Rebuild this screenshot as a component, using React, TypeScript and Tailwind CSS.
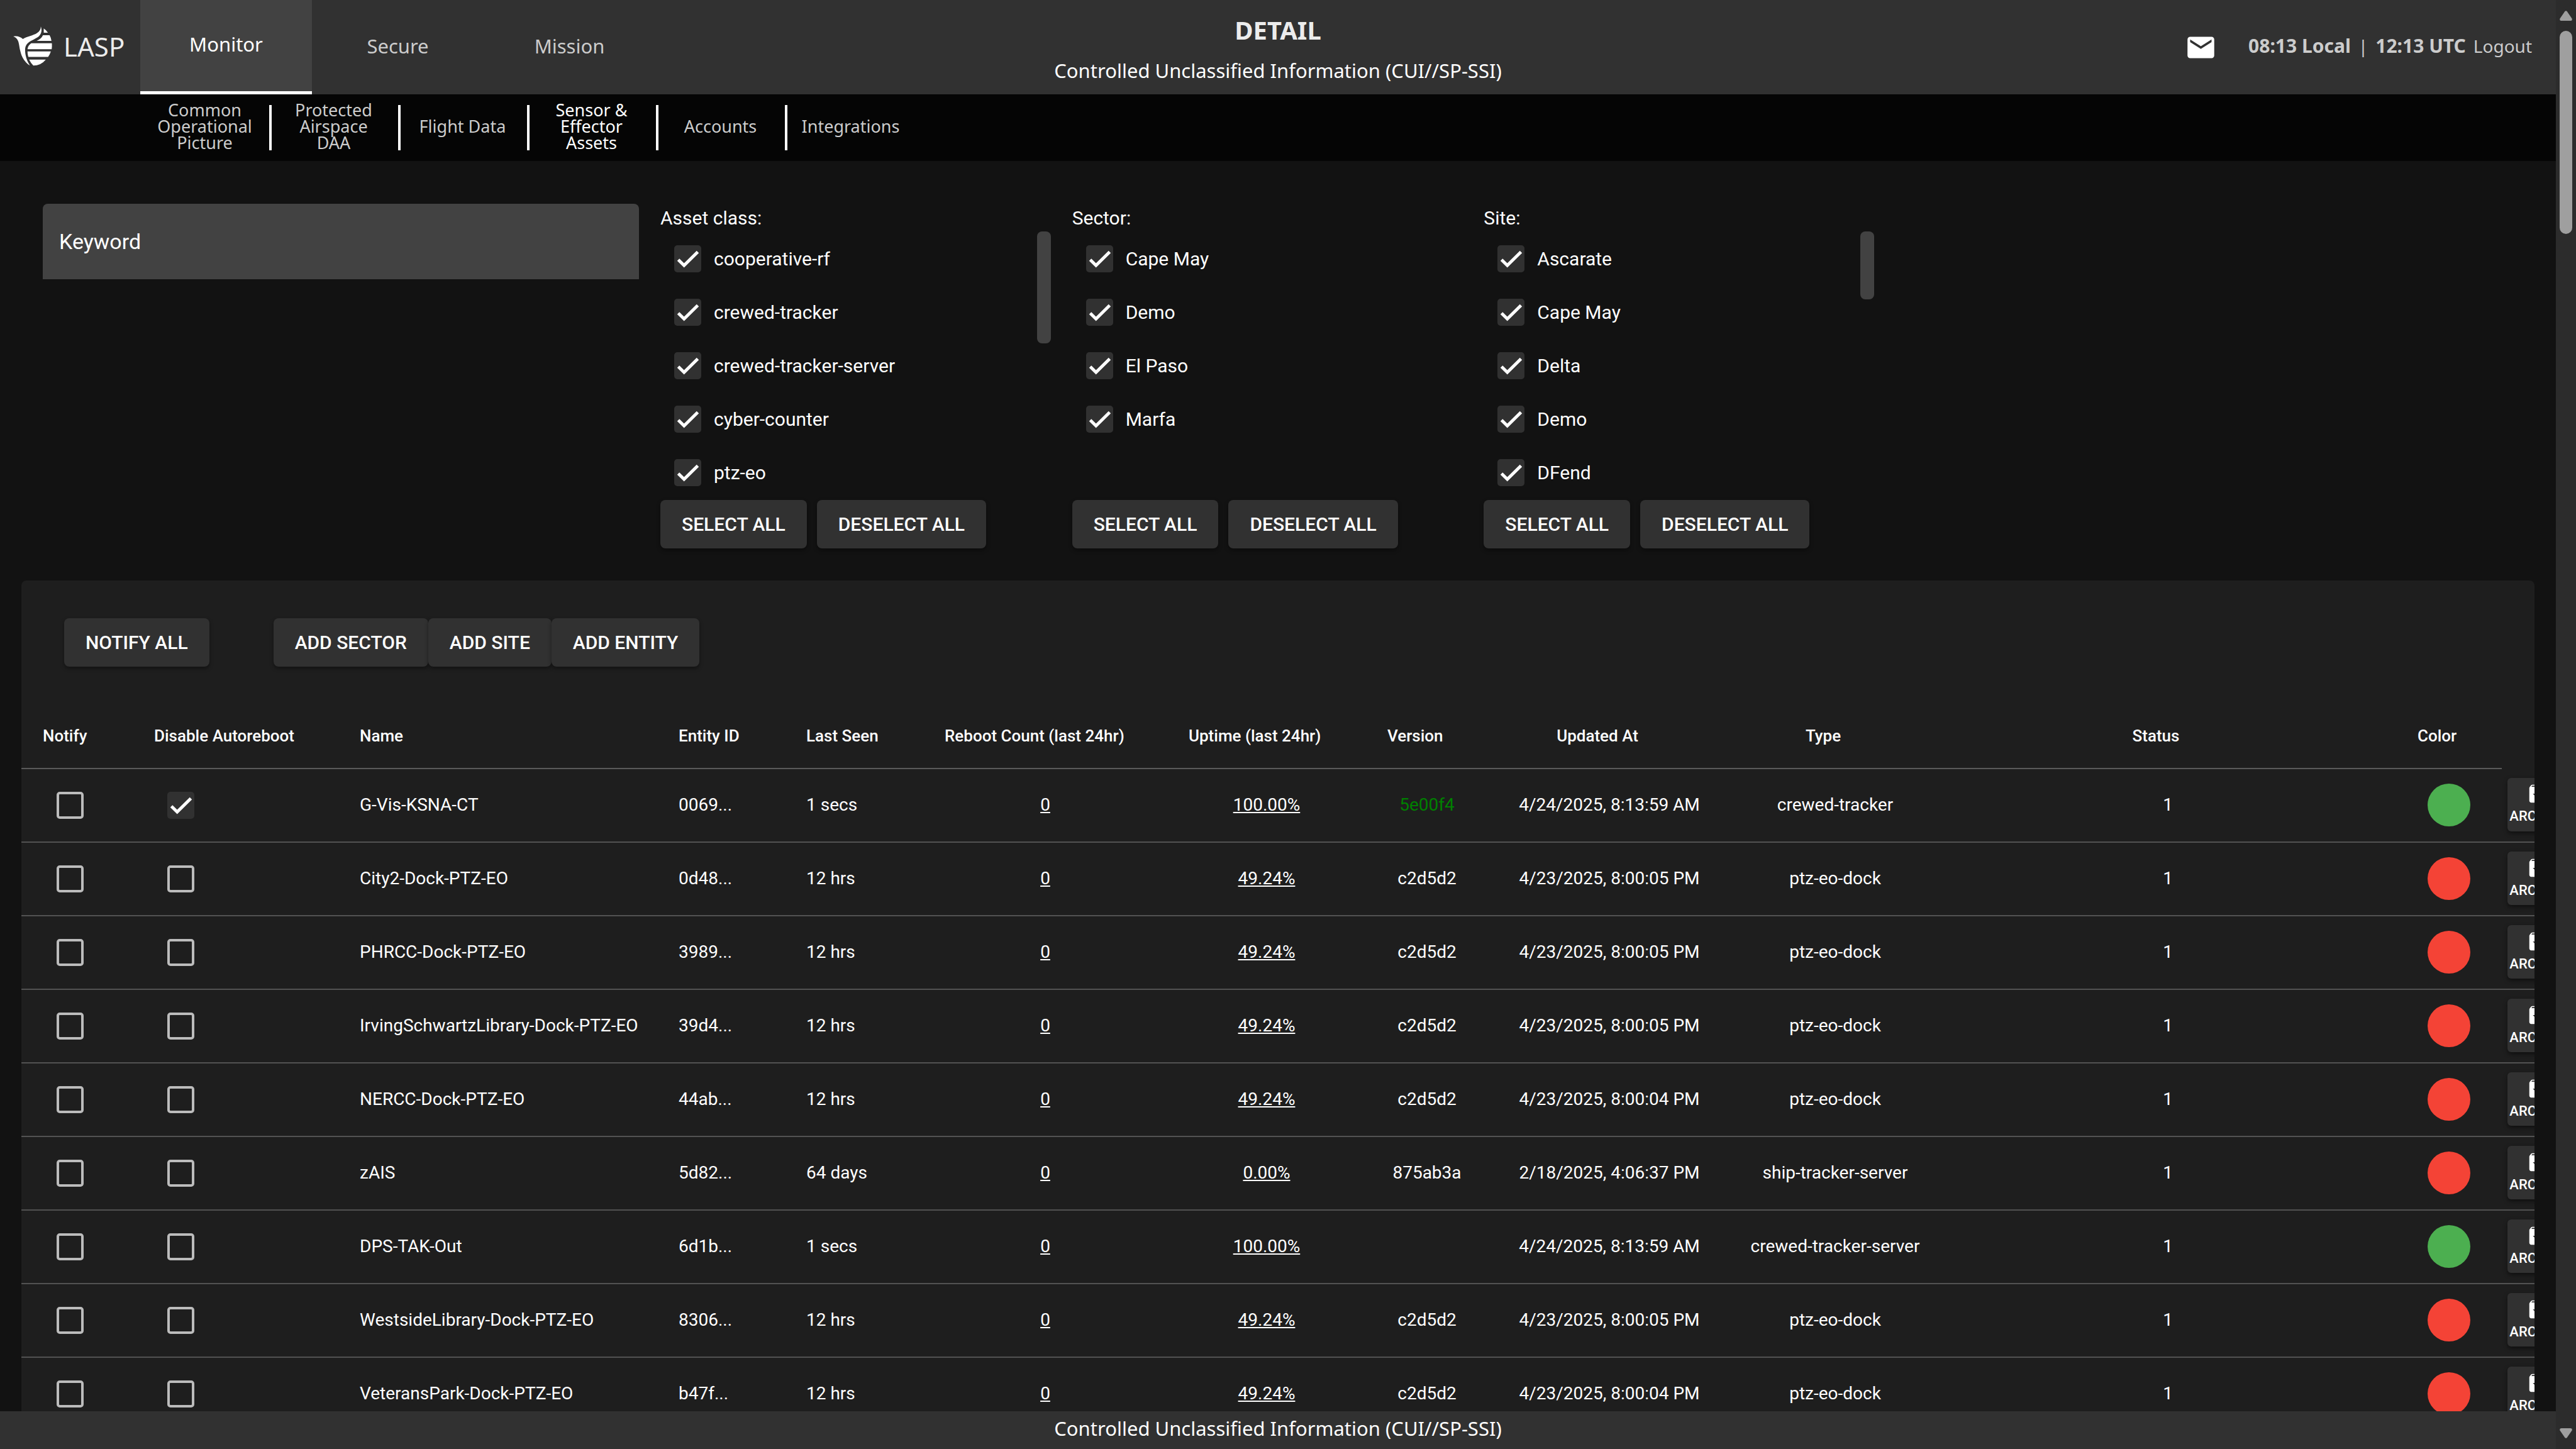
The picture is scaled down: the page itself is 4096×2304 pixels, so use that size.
import React from "react";
import { MdArchive, MdEmail } from "react-icons/md";

const tabs = ["Monitor", "Secure", "Mission"];

const subTabs = [
  "Common Operational Picture",
  "Protected Airspace DAA",
  "Flight Data",
  "Sensor & Effector Assets",
  "Accounts",
  "Integrations",
];

const filters = [
  {
    title: "Asset class",
    options: [
      "cooperative-rf",
      "crewed-tracker",
      "crewed-tracker-server",
      "cyber-counter",
      "ptz-eo",
    ],
    thumb: "h-[178px]",
  },
  {
    title: "Sector",
    options: ["Cape May", "Demo", "El Paso", "Marfa"],
  },
  {
    title: "Site",
    options: ["Ascarate", "Cape May", "Delta", "Demo", "DFend"],
    thumb: "h-[108px]",
  },
];

const columns = [
  { title: "Notify", width: "w-[177px]" },
  { title: "Disable Autoreboot", width: "w-[327px]" },
  { title: "Name", width: "w-[507px]" },
  { title: "Entity ID", width: "w-[203px]" },
  { title: "Last Seen", width: "w-[220px]" },
  { title: "Reboot Count (last 24hr)", width: "w-[388px]", center: true },
  { title: "Uptime (last 24hr)", width: "w-[316px]", center: true },
  { title: "Version", width: "w-[194px]", center: true },
  { title: "Updated At", width: "w-[386px]", center: true },
  { title: "Type", width: "w-[332px]", center: true },
  { title: "Status", width: "", center: true },
  { title: "Color", width: "w-[168px]", center: true },
];

const assets = [
  { name: "G-Vis-KSNA-CT", id: "0069...", seen: "1 secs", uptime: "100.00%", version: "5e00f4", updated: "4/24/2025, 8:13:59 AM", type: "crewed-tracker", online: true, noReboot: true, latest: true },
  { name: "City2-Dock-PTZ-EO", id: "0d48...", seen: "12 hrs", uptime: "49.24%", version: "c2d5d2", updated: "4/23/2025, 8:00:05 PM", type: "ptz-eo-dock" },
  { name: "PHRCC-Dock-PTZ-EO", id: "3989...", seen: "12 hrs", uptime: "49.24%", version: "c2d5d2", updated: "4/23/2025, 8:00:05 PM", type: "ptz-eo-dock" },
  { name: "IrvingSchwartzLibrary-Dock-PTZ-EO", id: "39d4...", seen: "12 hrs", uptime: "49.24%", version: "c2d5d2", updated: "4/23/2025, 8:00:05 PM", type: "ptz-eo-dock" },
  { name: "NERCC-Dock-PTZ-EO", id: "44ab...", seen: "12 hrs", uptime: "49.24%", version: "c2d5d2", updated: "4/23/2025, 8:00:04 PM", type: "ptz-eo-dock" },
  { name: "zAIS", id: "5d82...", seen: "64 days", uptime: "0.00%", version: "875ab3a", updated: "2/18/2025, 4:06:37 PM", type: "ship-tracker-server" },
  { name: "DPS-TAK-Out", id: "6d1b...", seen: "1 secs", uptime: "100.00%", version: "", updated: "4/24/2025, 8:13:59 AM", type: "crewed-tracker-server", online: true },
  { name: "WestsideLibrary-Dock-PTZ-EO", id: "8306...", seen: "12 hrs", uptime: "49.24%", version: "c2d5d2", updated: "4/23/2025, 8:00:05 PM", type: "ptz-eo-dock" },
  { name: "VeteransPark-Dock-PTZ-EO", id: "b47f...", seen: "12 hrs", uptime: "49.24%", version: "c2d5d2", updated: "4/23/2025, 8:00:04 PM", type: "ptz-eo-dock" },
];

function Logo() {
  return (
    <svg viewBox="64 124 186 190" className="h-[63px] w-[62px] fill-white">
      <path d="M64 172C84 168 96 174 110 184C130 172 160 168 178 156C190 148 196 138 196 124C202 140 200 158 188 170C176 182 150 190 134 204C118 218 120 240 122 256C126 280 134 296 144 312C118 296 104 270 98 244C92 222 92 200 84 188C78 178 72 174 64 172Z" />
      <path d="M210 134Q222 142 230 154H210Z" />
      <path d="M206 166H238Q245 178 247 193H176Q198 184 206 166Z" />
      <path d="M150 205H249Q250 220 248 233H132Q134 216 150 205Z" />
      <path d="M132 244H244Q240 258 231 270H136Q132 258 132 244Z" />
      <path d="M140 283H220Q196 312 160 312Q148 300 140 283Z" />
    </svg>
  );
}

function Checkbox({ id, label, checked }: { id?: string; label?: string; checked?: boolean }) {
  return (
    <span className="inline-grid shrink-0 align-middle">
      <input
        id={id}
        type="checkbox"
        aria-label={label}
        defaultChecked={checked}
        className="peer col-start-1 row-start-1 size-[43px] appearance-none rounded-[5px] border-4 border-[#bcbcbc] checked:border-[#313131] checked:bg-[#313131]"
      />
      <svg
        viewBox="0 0 43 43"
        className="pointer-events-none col-start-1 row-start-1 hidden size-[43px] fill-none stroke-white stroke-[5px] peer-checked:block"
      >
        <path d="M6.5 23L15.7 32L37.5 10.5" />
      </svg>
    </span>
  );
}

function Button({ children }: { children: React.ReactNode }) {
  return (
    <button className="h-[77px] rounded-lg bg-[#313131] px-[34px] text-[30px] font-medium whitespace-nowrap uppercase shadow-[0_3px_6px_rgba(0,0,0,0.4)]">
      {children}
    </button>
  );
}

function Header() {
  return (
    <header className="grid h-[150px] shrink-0 grid-cols-[1fr_auto_1fr] bg-[#313131] font-['Noto_Sans',sans-serif]">
      <div className="flex">
        <a href="#" className="flex w-[223px] items-center gap-[18px] pb-1 pl-[21px] text-[42px] text-[#ececec]">
          <Logo />
          LASP
        </a>
        <nav className="flex text-[31px]">
          {tabs.map((tab, index) => (
            <a
              key={tab}
              href="#"
              className={
                index === 0
                  ? "flex w-[273px] items-center justify-center border-b-[5px] border-white bg-[#424242] pb-1 text-white"
                  : "flex w-[273px] items-center justify-center pb-1 text-[#cccccc]"
              }
            >
              {tab}
            </a>
          ))}
        </nav>
      </div>
      <div className="flex flex-col items-center justify-center gap-[18px] pt-2 text-center">
        <h1 className="text-[40px] leading-[48px] font-bold text-[#ececec]">DETAIL</h1>
        <p className="text-[31px] leading-[44px]">Controlled Unclassified Information (CUI//SP-SSI)</p>
      </div>
      <div className="flex items-center justify-end pr-[38px]">
        <button aria-label="Messages" className="mr-[50px] text-white">
          <MdEmail className="size-[51px]" />
        </button>
        <div className="flex items-baseline pb-1.5 text-[28px] text-[#cccccc]">
          <b className="text-[30px]">08:13 Local</b>
          <span className="mx-3">|</span>
          <b className="text-[30px]">12:13 UTC</b>
          <a href="#" className="ml-3">
            Logout
          </a>
        </div>
      </div>
    </header>
  );
}

function SubNav() {
  return (
    <nav className="flex h-[106px] shrink-0 items-center bg-[#050505] pl-[227px] font-['Noto_Sans',sans-serif] text-[27px] leading-[26px] text-[#cccccc]">
      {subTabs.map((tab, index) => (
        <a
          key={tab}
          href="#"
          className={`flex h-[72px] w-[205px] items-center justify-center pr-6 pb-1 pl-5 text-center ${
            index < subTabs.length - 1 ? "border-r-4 border-white" : ""
          }`}
        >
          <span className={index === 3 ? "text-white" : ""}>{tab}</span>
        </a>
      ))}
    </nav>
  );
}

function Filters() {
  return (
    <section className="flex px-[68px] pt-[68px]">
      <div className="w-1/4 pr-[34px]">
        <input
          aria-label="Keyword"
          placeholder="Keyword"
          className="h-[120px] w-full rounded-t-lg bg-[#424242] px-[26px] text-[34px] placeholder:text-white"
        />
      </div>
      {filters.map((filter) => (
        <fieldset key={filter.title} className="w-1/6 pr-[34px] text-[30px]">
          <legend className="h-[44px] leading-[46px]">{filter.title}:</legend>
          <div className="flex h-[427px] justify-between overflow-hidden">
            <ul className="pt-px pl-[22px]">
              {filter.options.map((option) => (
                <li key={option} className="flex h-[85px] items-center gap-5">
                  <Checkbox id={`${filter.title}-${option}`} checked />
                  <label htmlFor={`${filter.title}-${option}`}>{option}</label>
                </li>
              ))}
            </ul>
            {filter.thumb && <div className={`w-[22px] rounded-lg bg-[#424242] ${filter.thumb}`} />}
          </div>
          <div className="flex gap-4">
            <Button>Select all</Button>
            <Button>Deselect all</Button>
          </div>
        </fieldset>
      ))}
    </section>
  );
}

function AssetTable() {
  return (
    <table className="w-[calc(100%+240px)] table-fixed text-[28px]">
      <thead>
        <tr className="h-[103px] text-[26px]">
          {columns.map((column) => (
            <th
              key={column.title}
              className={`border-b-2 border-[#5a5a5a] pl-[34px] font-medium whitespace-nowrap ${column.width} ${
                column.center ? "pr-[72px] text-center" : "text-left"
              }`}
            >
              {column.title}
            </th>
          ))}
          <td className="w-[292px]" />
        </tr>
      </thead>
      <tbody>
        {assets.map((asset) => (
          <tr
            key={asset.id}
            className="h-[117px] border-b-2 border-[#525252] text-center whitespace-nowrap *:pb-[2px]"
          >
            <td className="pl-[56px] text-left">
              <Checkbox label={`Notify ${asset.name}`} />
            </td>
            <td className="pl-[55px] text-left">
              <Checkbox label={`Disable autoreboot for ${asset.name}`} checked={asset.noReboot} />
            </td>
            <td className="pl-[34px] text-left">{asset.name}</td>
            <td className="pl-[34px] text-left">{asset.id}</td>
            <td className="pl-[34px] text-left">{asset.seen}</td>
            <td>
              <a href="#" className="underline">
                0
              </a>
            </td>
            <td>
              <a href="#" className="underline">
                {asset.uptime}
              </a>
            </td>
            <td className={asset.latest ? "text-[#008000]" : ""}>{asset.version}</td>
            <td>{asset.updated}</td>
            <td>{asset.type}</td>
            <td>1</td>
            <td>
              <div className={`mx-auto size-[68px] rounded-full ${asset.online ? "bg-[#4caf50]" : "bg-[#f44336]"}`} />
            </td>
            <td className="pl-[9px] text-left">
              <button className="flex h-[85px] w-[98px] flex-col items-center justify-center rounded-md bg-[#313131] align-middle text-[22px] leading-[34px] font-medium uppercase shadow-[0_3px_6px_rgba(0,0,0,0.5)]">
                <MdArchive className="size-[38px]" />
                Archive
              </button>
            </td>
          </tr>
        ))}
      </tbody>
    </table>
  );
}

function Scrollbar() {
  return (
    <div className="flex w-8 shrink-0 flex-col items-center bg-[#2c2c2c] py-[17px]">
      <svg viewBox="0 0 20 16" className="h-4 w-5 fill-[#9f9f9f]">
        <path d="M8 1.500Q10-1 12 1.500L19.500 12.500Q20.500 16 17 16H3Q-.5 16 .5 12.500Z" />
      </svg>
      <div className="mt-4 h-[323px] w-5 rounded-full bg-[#9f9f9f]" />
      <svg viewBox="0 0 20 16" className="mt-auto h-4 w-5 rotate-180 fill-[#9f9f9f]">
        <path d="M8 1.500Q10-1 12 1.500L19.500 12.500Q20.500 16 17 16H3Q-.5 16 .5 12.500Z" />
      </svg>
    </div>
  );
}

export default function App() {
  return (
    <div className="flex h-screen overflow-hidden bg-[#121212] font-[Roboto,sans-serif] text-white">
      <div className="flex min-w-0 flex-1 flex-col">
        <Header />
        <SubNav />
        <main className="min-h-0 flex-1 overflow-hidden">
          <Filters />
          <section className="mx-[34px] mt-[51px] overflow-hidden rounded-lg bg-[#1e1e1e]">
            <div className="flex px-[68px] pt-[60px] pb-[59px]">
              <Button>Notify all</Button>
              <div className="ml-[102px] flex">
                <Button>Add sector</Button>
                <Button>Add site</Button>
                <Button>Add entity</Button>
              </div>
            </div>
            <AssetTable />
          </section>
        </main>
        <footer className="flex h-[60px] shrink-0 items-center justify-center bg-[#313131] pb-1.5 font-['Noto_Sans',sans-serif] text-[31px]">
          Controlled Unclassified Information (CUI//SP-SSI)
        </footer>
      </div>
      <Scrollbar />
    </div>
  );
}
